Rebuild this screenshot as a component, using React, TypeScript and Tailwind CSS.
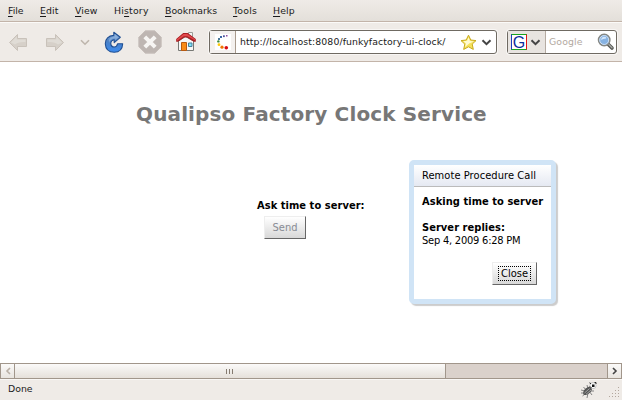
import React from 'react';

const menus = [
  { label: 'File', access: 0, size: 'w-[32px]' },
  { label: 'Edit', access: 0, size: 'w-[35px] tracking-[0.1px]' },
  { label: 'View', access: 0, size: 'w-[39px] tracking-[0.1px]' },
  { label: 'History', access: 2, size: 'w-[51px] tracking-[0.2px]' },
  { label: 'Bookmarks', access: 0, size: 'w-[68px]' },
  { label: 'Tools', access: 0, size: 'w-[40px] tracking-[0.2px]' },
  { label: 'Help', access: 0, size: 'w-[40px] tracking-[0.1px]' },
];

function MenuBar() {
  return (
    <nav className="flex h-[23px] shrink-0 items-start border-b border-[#fbfaf8] bg-linear-to-b from-[#efebe7] to-[#e3dfd9] pl-2 pt-[4px] shadow-[inset_0_-1px_0_#c3b4a9]">
      {menus.map(({ label, access, size }) => (
        <span key={label} className={`block shrink-0 leading-[14px] ${size}`}>
          {label.slice(0, access)}
          <span className="underline underline-offset-2">{label[access]}</span>
          {label.slice(access + 1)}
        </span>
      ))}
    </nav>
  );
}

function Arrow({ right = false }: { right?: boolean }) {
  return (
    <svg width="20" height="20" viewBox="0 0 20 20" className={right ? 'shrink-0 -scale-x-100' : 'shrink-0'}>
      <path d="M1.5 10.5 9.5 2.5V6.5H18.5V14.5H9.5V18.5Z" fill="#d6d0c9" stroke="#c9c2ba" strokeLinejoin="round" />
      <path d="M3 10.5 8.7 4.8V7.5H17.5V10Q10 9.5 7 12.5Z" fill="#e0dcd6" />
    </svg>
  );
}

function Chevron({ color, w = 10, stroke = 2 }: { color: string; w?: number; stroke?: number }) {
  return (
    <svg width={w} height="7" viewBox="0 0 10 7" className="shrink-0">
      <path d="M1 1.2 5 5.2 9 1.2" fill="none" stroke={color} strokeWidth={stroke} />
    </svg>
  );
}

function Reload() {
  return (
    <svg width="20" height="23" viewBox="0 0 20 23" className="shrink-0">
      <defs>
        <linearGradient id="ring" x1="0" y1="0" x2="0" y2="1">
          <stop offset="0" stopColor="#8fb3dc" />
          <stop offset=".45" stopColor="#4a7fc4" />
          <stop offset="1" stopColor="#3c8cf0" />
        </linearGradient>
      </defs>
      <path d="M9.8 1.2 16.3 6.3 10.2 11.6V8.7Q6.8 9.3 6.8 12.6Q7 15.9 10.3 16Q13 15.8 13.7 12.7H18.7Q18.3 21 10.2 21.3Q1.7 21 1.3 12.7Q1.6 5.2 9.8 4.4Z" fill="url(#ring)" stroke="#204f92" strokeWidth="1.1" strokeLinejoin="round" />
      <path d="M10.7 3.2 14.6 6.3 11.2 9.2V7.4Q6.5 7.3 5 12Q3.6 6.4 10.7 5.6Z" fill="#a9c5e6" opacity=".5" />
    </svg>
  );
}

function Stop() {
  return (
    <svg width="24" height="24" viewBox="0 0 24 24" className="shrink-0">
      <path d="M7.2.8H16.8L23.2 7.2V16.8L16.8 23.2H7.2L.8 16.8V7.2Z" fill="#beb6b2" stroke="#c8c0bc" />
      <path d="M6.8 6.8 17.2 17.2M17.2 6.8 6.8 17.2" stroke="#f7f5f3" strokeWidth="4" />
    </svg>
  );
}

function Home() {
  return (
    <svg width="22" height="22" viewBox="0 0 22 22" className="shrink-0">
      <path d="M13.5 6V1.5H17.5V8" fill="#f5f5f3" stroke="#9a9c97" />
      <path d="M3.5 10 10.5 5.5 18.5 10V19.5H3.5Z" fill="#f7f7f6" stroke="#777874" />
      <path d="M1.2 10.8V7.9L8.2 2.1H12.8L20.8 7.9V10.8H18.8L12 6.6H9.2L3 10.8Z" fill="#a91f22" />
      <path d="M2 8.3 8.6 2.9H12.4L20 8.3V9.2L12.3 5.3H8.9L2 9.7Z" fill="#e2494d" />
      <path d="M6.5 19.5V11.5H11.5V19.5Z" fill="#f98b16" stroke="#b85a10" />
      <path d="M13.5 12H17V15.5H13.5Z" fill="#7de2f5" stroke="#477f9d" />
    </svg>
  );
}

function SiteIcon() {
  return (
    <svg width="16" height="16" viewBox="0 0 16 16" className="shrink-0 bg-white">
      <rect x="11" y="1" width="1.5" height="1.5" fill="#8e4aa0" />
      <rect x="8" y="1.3" width="1.8" height="1.8" fill="#50509a" />
      <rect x="5" y="2" width="2" height="2" fill="#3c67a5" />
      <rect x="3" y="4" width="2" height="2" fill="#4a7899" />
      <circle cx="3.4" cy="7.4" r="1.2" fill="#3b8a3f" />
      <circle cx="4" cy="10.7" r="1.4" fill="#ffca0a" />
      <circle cx="7" cy="13.2" r="1.6" fill="#f07300" />
      <circle cx="11.3" cy="13.7" r="1.8" fill="#d60a12" />
    </svg>
  );
}

function Star() {
  return (
    <svg width="17" height="17" viewBox="0 0 17 17" className="shrink-0">
      <path d="M8.5 1.2 10.8 6 16 6.6 12.2 10.1 13.3 15.4 8.5 12.8 3.7 15.4 4.8 10.1 1 6.6 6.2 6Z" fill="#f6e25d" stroke="#c9aa1c" strokeLinejoin="round" />
      <path d="M8.5 3.6 10 7 14 7.4 9.5 9.3 5 13 6 9.5 3.2 7.3 7 6.8Z" fill="#fffbd2" />
    </svg>
  );
}

function Magnifier() {
  return (
    <svg width="18" height="18" viewBox="0 0 18 18" className="shrink-0">
      <path d="M11.2 11.2 15 15" stroke="#555753" strokeWidth="3.6" strokeLinecap="round" />
      <path d="M11.5 11.2 15 14.7" stroke="#a7a9a5" strokeWidth="1.3" strokeLinecap="round" />
      <circle cx="7.2" cy="7" r="5.7" fill="#81aedf" stroke="#858783" strokeWidth="1.5" />
      <circle cx="7.2" cy="7" r="4.5" fill="#86b2e2" stroke="#e0eaf5" strokeWidth=".8" />
      <path d="M4.2 7Q4 4 7.5 3.8Q9.7 4 9.2 5.5Q5.7 5.5 4.2 7Z" fill="#d4e7fb" />
    </svg>
  );
}

function Toolbar() {
  return (
    <div className="flex h-[39px] shrink-0 items-center border-b border-[#c3b4a9] bg-[#efebe7] pl-[8px]">
      <Arrow />
      <div className="w-[17px]" />
      <Arrow right />
      <div className="w-[15px]" />
      <Chevron color="#beb6ad" stroke={1.6} />
      <div className="w-[14px]" />
      <Reload />
      <div className="w-[14px]" />
      <Stop />
      <div className="w-[13px]" />
      <Home />
      <div className="ml-[12px] flex h-6 w-[288px] shrink-0 items-center rounded-[3px] border border-[#6f6a62] bg-white shadow-[0_0_0_1px_#f8f6f4]">
        <div className="flex h-full w-[26px] shrink-0 items-center border-r border-[#a99b8e] bg-[#f4f1ef] pl-[5px]">
          <SiteIcon />
        </div>
        <span className="w-[224px] pl-1 tracking-[0.1px] whitespace-nowrap text-[#1a1a1a]">http://localhost:8080/funkyfactory-ui-clock/</span>
        <Star />
        <div className="w-[4px]" />
        <Chevron color="#444" w={11} />
      </div>
      <div className="ml-[10px] flex h-6 w-[110px] shrink-0 items-center rounded-[3px] border border-[#6f6a62] bg-white shadow-[0_0_0_1px_#f8f6f4]">
        <div className="flex h-full w-[38px] shrink-0 items-center border-r border-[#b5aba2] bg-[#e8e4e0] pl-[3px]">
          <div className="flex h-4 w-4 items-center justify-center border border-t-[#18a51d] border-r-[#e31616] border-b-[#18a51d] border-l-[#1d3dbd] bg-white pt-px font-['Liberation_Sans',sans-serif] text-[16px] leading-[14px] text-[#0b2d9c]">G</div>
          <div className="w-[3px]" />
          <Chevron color="#444" w={11} />
        </div>
        <span className="w-[51px] pl-[3px] tracking-[0.1px] text-[#b2a99f]">Google</span>
        <Magnifier />
      </div>
    </div>
  );
}

function Page() {
  return (
    <main className="relative h-[301px] shrink-0 bg-white font-['DejaVu_Sans_Condensed','DejaVu_Sans',sans-serif] text-[11px] leading-[13px] text-black">
      <h1 className="pt-[40px] pl-[136px] font-['DejaVu_Sans',sans-serif] text-[20px] leading-6 font-bold tracking-[0.13px] whitespace-nowrap text-[#777]">Qualipso Factory Clock Service</h1>
      <div className="ml-[257px] w-[110px] pt-[73px]">
        <b className="block tracking-[0.05px] whitespace-nowrap">Ask time to server:</b>
        <button className="mt-[4px] ml-[7px] block h-[23px] w-[42px] border border-t-[#eee] border-r-[#666] border-b-[#666] border-l-[#eee] bg-linear-to-b from-white to-[#d8d8d8] text-[#888b94]">Send</button>
      </div>
      <section className="absolute top-[98px] left-[409px] h-[144px] w-[147px] rounded-[5px] border-[5px] border-[#d0e4f6] bg-white shadow-[2px_2px_1px_#ccc]">
        <header className="h-[22px] border-b border-[#bbb] bg-linear-to-b from-white to-[#e5e9f2] pt-[4px] pl-2 tracking-[0.07px] whitespace-nowrap">Remote Procedure Call</header>
        <div className="pt-2 pl-2 whitespace-nowrap">
          <b className="block tracking-[0.05px]">Asking time to server</b>
          <b className="mt-[13px] block tracking-[0.05px]">Server replies:</b>
          <span className="block tracking-[-0.22px]">Sep 4, 2009 6:28 PM</span>
        </div>
        <button className="mt-[15px] ml-[78px] flex h-[23px] w-[45px] items-center justify-center border border-t-[#eee] border-r-[#666] border-b-[#666] border-l-[#eee] bg-linear-to-b from-white to-[#d8d8d8]">
          <span className="flex h-[15px] w-[33px] items-center justify-center border border-dotted border-black">Close</span>
        </button>
      </section>
    </main>
  );
}

function ScrollBar() {
  return (
    <div className="flex h-[16px] shrink-0 border-y border-[#a1968b] bg-[#dad1cb]">
      <div className="flex w-[15px] items-center justify-center border-r border-l border-[#a1968b] bg-linear-to-b from-[#fbfaf9] to-[#e8e4df]">
        <svg width="6" height="8"><path d="M5 1 2 4 5 7" fill="none" stroke="#b9b0a6" strokeWidth="1.6" /></svg>
      </div>
      <div className="flex w-[431px] items-center justify-center gap-[2px] border-r border-[#a1968b] bg-linear-to-b from-[#fbfaf9] to-[#e5e0da] pr-[2px]">
        <i className="h-[5px] w-px bg-[#857b70]" />
        <i className="h-[5px] w-px bg-[#857b70]" />
        <i className="h-[5px] w-px bg-[#857b70]" />
      </div>
      <div className="ml-auto flex w-[15px] items-center justify-center border-x border-[#a1968b] bg-linear-to-b from-[#fbfaf9] to-[#e8e4df]">
        <svg width="6" height="8"><path d="M1 1 4 4 1 7" fill="none" stroke="#444" strokeWidth="1.6" /></svg>
      </div>
    </div>
  );
}

const gripDots = [[9, 0], [6, 3], [9, 3], [3, 6], [6, 6], [9, 6], [0, 9], [3, 9], [6, 9], [9, 9]];

function StatusBar() {
  return (
    <footer className="flex h-[21px] shrink-0 items-start border-t border-[#f9f7f5] bg-[#efebe7] pt-[2px] pl-2">
      <span className="leading-[14px]">Done</span>
      <svg width="17" height="17" viewBox="0 0 17 17" className="ml-auto shrink-0">
        <path d="M3.5 5 6 8M7 3 8 7M1 8 5 9M1 11H5M2.5 14 6 11M7 16 8 11M12 13 9 9M14 9H10" stroke="#858585" />
        <ellipse cx="7.6" cy="8.8" rx="5.4" ry="3" transform="rotate(-42 7.6 8.8)" fill="#555" />
        <path d="M4.5 11 9.5 6.6M6 12.3 11 8" stroke="#a4a4a4" />
        <circle cx="13" cy="3.6" r="3.1" fill="#fafafa" stroke="#aaa" strokeWidth=".6" />
        <path d="M12 2.5H14.5V5H12Z" fill="#111" />
        <path d="M9.5 .8 11 1.7M14.5 .5H16V2M10 4.5 11.5 6" fill="none" stroke="#222" />
      </svg>
      <svg width="12" height="12" className="mt-[5px] mr-px ml-[12px] shrink-0">
        {gripDots.map(([x, y]) => <rect key={x + '-' + y} x={x} y={y} width="1" height="1" fill="#b3a79d" />)}
      </svg>
    </footer>
  );
}

export default function App() {
  return (
    <div className="flex h-[400px] w-[622px] flex-col overflow-hidden bg-[#efebe7] font-['DejaVu_Sans',sans-serif] text-[9.33px] text-[#1a1a1a]">
      <MenuBar />
      <Toolbar />
      <Page />
      <ScrollBar />
      <StatusBar />
    </div>
  );
}
